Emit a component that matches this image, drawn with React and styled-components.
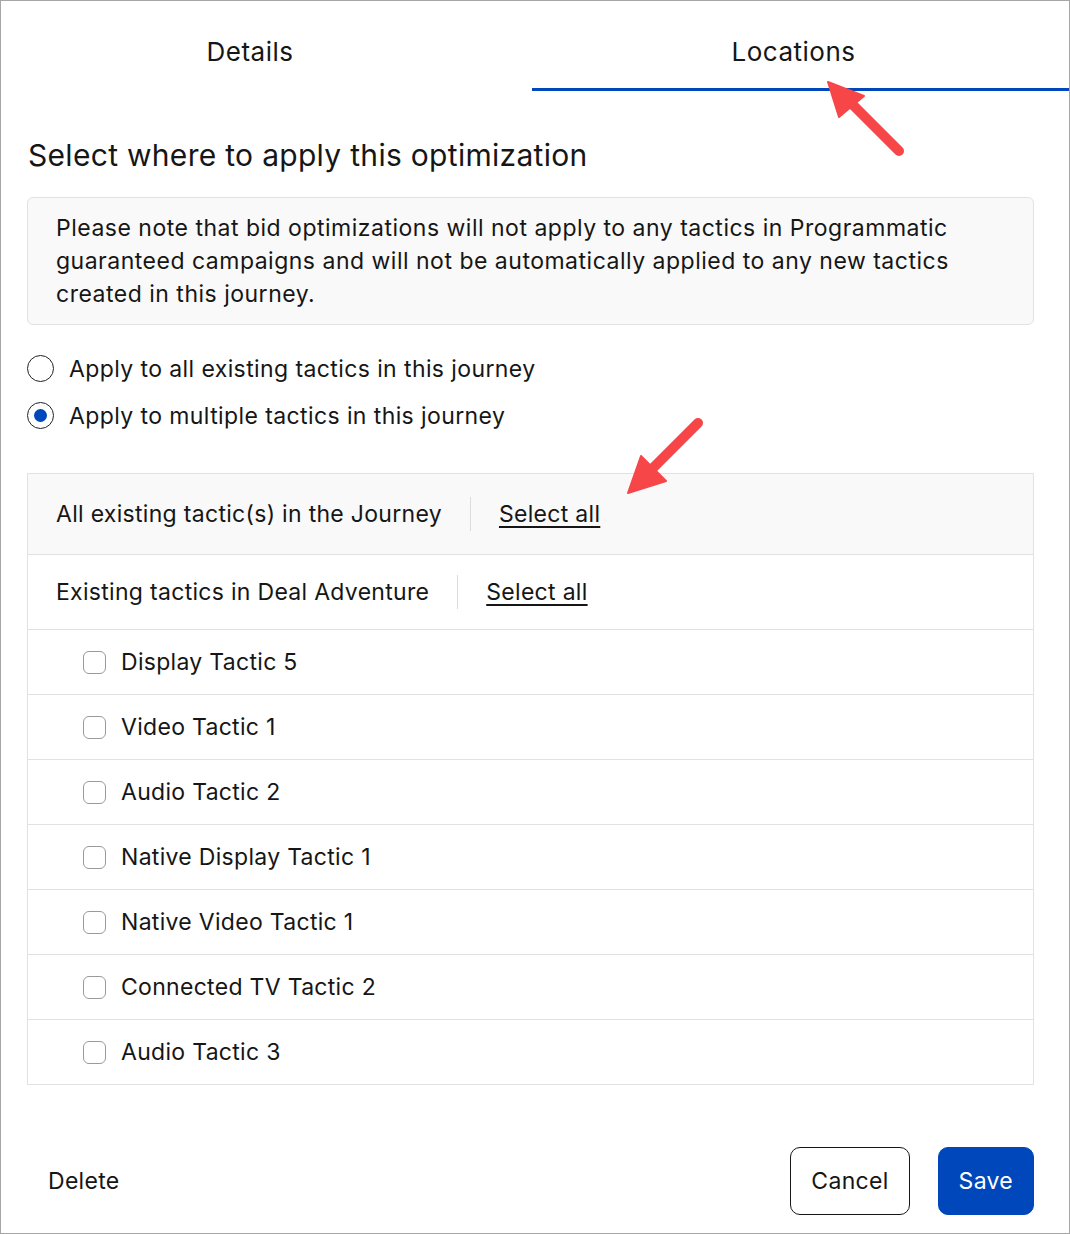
import styled, { createGlobalStyle } from "styled-components";

const GlobalStyle = createGlobalStyle`
  html, body {
    margin: 0;
    padding: 0;
    background: #ffffff;
  }
  body {
    font-family: "Inter", "Noto Sans", sans-serif;
    color: #161616;
    letter-spacing: 0.3px;
  }
  * {
    box-sizing: border-box;
  }
`;

const tactics = [
  "Display Tactic 5",
  "Video Tactic 1",
  "Audio Tactic 2",
  "Native Display Tactic 1",
  "Native Video Tactic 1",
  "Connected TV Tactic 2",
  "Audio Tactic 3",
];

const Arrows = () => (
  <ArrowLayer width="1070" height="1234" viewBox="0 0 1070 1234">
    <g fill="#f74648" stroke="#f74648" strokeLinecap="round" strokeLinejoin="round">
      <line x1="899" y1="151" x2="852" y2="104" strokeWidth="10" />
      <polygon points="828,82 864,96 839,117" strokeWidth="2" />
      <line x1="698" y1="423" x2="650" y2="471" strokeWidth="10" />
      <polygon points="628,493 641,456 666,481" strokeWidth="2" />
    </g>
  </ArrowLayer>
);

const App = () => {
  return (
    <>
      <GlobalStyle />
      <Frame>
        <Tabs>
          <Tab $width="531px" $shift="33px">Details</Tab>
          <Tab $active $shift="14px">Locations</Tab>
        </Tabs>

        <Content>
          <Heading>Select where to apply this optimization</Heading>
          <Note>
            Please note that bid optimizations will not apply to any tactics in Programmatic
            guaranteed campaigns and will not be automatically applied to any new tactics
            created in this journey.
          </Note>

          <RadioGroup>
            <RadioRow>
              <Radio />
              <span>Apply to all existing tactics in this journey</span>
            </RadioRow>
            <RadioRow>
              <Radio $checked />
              <span>Apply to multiple tactics in this journey</span>
            </RadioRow>
          </RadioGroup>

          <Table>
            <GroupRow $shaded $height="81px">
              <GroupLabel>All existing tactic(s) in the Journey</GroupLabel>
              <Divider />
              <SelectAll href="#">Select all</SelectAll>
            </GroupRow>
            <GroupRow $height="75px">
              <GroupLabel>Existing tactics in Deal Adventure</GroupLabel>
              <Divider />
              <SelectAll href="#">Select all</SelectAll>
            </GroupRow>
            {tactics.map((t) => (
              <TacticRow key={t}>
                <Checkbox />
                <span>{t}</span>
              </TacticRow>
            ))}
          </Table>
        </Content>

        <Footer>
          <DeleteLink>Delete</DeleteLink>
          <Actions>
            <Button>Cancel</Button>
            <Button $primary>Save</Button>
          </Actions>
        </Footer>

        <Arrows />
      </Frame>
    </>
  );
};

//Styled-Components

const Frame = styled.div`
  position: relative;
  width: 1070px;
  height: 1234px;
  border: 1px solid #a6a6a6;
  display: flex;
  flex-direction: column;
  background: #ffffff;
`;

const ArrowLayer = styled.svg`
  position: absolute;
  top: -1px;
  left: -1px;
  pointer-events: none;
`;

const Tabs = styled.div`
  display: flex;
  height: 90px;
`;

const Tab = styled.div`
  flex: ${({ $width }) => ($width ? `0 0 ${$width}` : "1")};
  display: flex;
  justify-content: center;
  padding-top: 35px;
  padding-right: ${({ $shift }) => $shift || "0"};
  font-size: 26px;
  line-height: 32px;
  letter-spacing: 0.5px;
  color: #161616;
  border-bottom: 3px solid ${({ $active }) => ($active ? "#0047bb" : "transparent")};
`;

const Content = styled.div`
  padding: 0 35px 0 26px;
  display: flex;
  flex-direction: column;
`;

const Heading = styled.h2`
  margin: 45px 0 0 1px;
  font-size: 30px;
  line-height: 38px;
  font-weight: 400;
  color: #161616;
`;

const Note = styled.div`
  margin-top: 23px;
  padding: 14px 20px 13px 28px;
  background: #f9f9f9;
  border: 1px solid #e2e2e2;
  border-radius: 6px;
  font-size: 23px;
  line-height: 33px;
  letter-spacing: 0.5px;
  color: #161616;
`;

const RadioGroup = styled.div`
  margin-top: 20px;
  display: flex;
  flex-direction: column;
`;

const RadioRow = styled.label`
  display: flex;
  align-items: center;
  gap: 15px;
  height: 47px;
  font-size: 23px;
  letter-spacing: 0.4px;
  color: #161616;
`;

const Radio = styled.span`
  width: 27px;
  height: 27px;
  border-radius: 50%;
  border: 1.5px solid #222;
  background: #fff;
  display: flex;
  align-items: center;
  justify-content: center;

  &::after {
    content: "";
    width: 13px;
    height: 13px;
    border-radius: 50%;
    background: ${({ $checked }) => ($checked ? "#0047bb" : "transparent")};
  }
`;

const Table = styled.div`
  margin-top: 34px;
  border: 1px solid #e2e2e2;
  border-bottom: none;
  display: flex;
  flex-direction: column;
`;

const GroupRow = styled.div`
  display: flex;
  align-items: center;
  height: ${({ $height }) => $height};
  padding-left: 28px;
  background: ${({ $shaded }) => ($shaded ? "#f9f9f9" : "#ffffff")};
  border-bottom: 1px solid #e2e2e2;
  font-size: 23px;
`;

const GroupLabel = styled.span`
  color: #161616;
`;

const Divider = styled.span`
  width: 1px;
  height: 34px;
  background: #dcdcdc;
  margin: 0 28px;
`;

const SelectAll = styled.a`
  color: #161616;
  text-decoration: underline;
  text-underline-offset: 4px;
`;

const TacticRow = styled.label`
  display: flex;
  align-items: center;
  gap: 15px;
  height: 65px;
  padding-left: 55px;
  border-bottom: 1px solid #e2e2e2;
  font-size: 23px;
  color: #161616;
`;

const Checkbox = styled.span`
  width: 23px;
  height: 23px;
  border: 1px solid #9a9a9a;
  border-radius: 6px;
  background: #fff;
`;

const Footer = styled.div`
  margin-top: auto;
  display: flex;
  align-items: center;
  justify-content: space-between;
  padding: 0 35px 18px 47px;
`;

const DeleteLink = styled.span`
  font-size: 23px;
  color: #161616;
`;

const Actions = styled.div`
  display: flex;
  gap: 28px;
`;

const Button = styled.button`
  height: 68px;
  padding: 0 20px;
  font-family: "Inter", "Noto Sans", sans-serif;
  font-size: 23px;
  letter-spacing: 0.3px;
  border-radius: 10px;
  border: 1px solid ${({ $primary }) => ($primary ? "#0047bb" : "#161616")};
  background: ${({ $primary }) => ($primary ? "#0047bb" : "#ffffff")};
  color: ${({ $primary }) => ($primary ? "#ffffff" : "#161616")};
`;

export default App;
